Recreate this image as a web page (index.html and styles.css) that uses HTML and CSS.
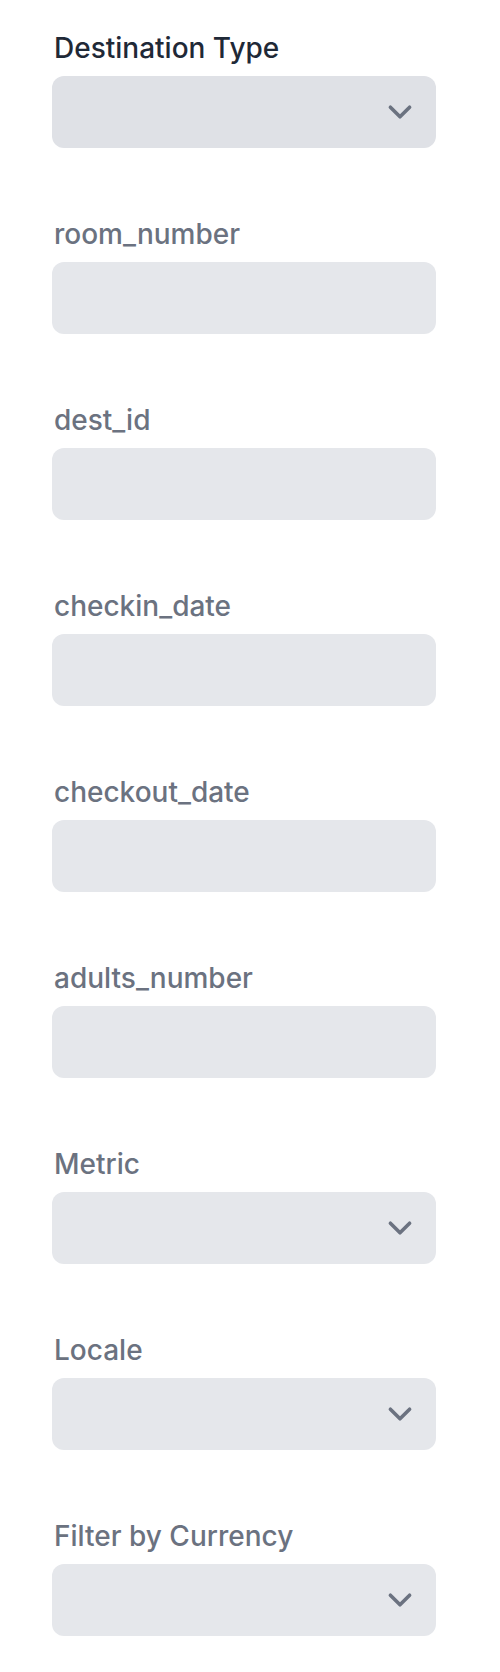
FILE: index.html
```html
<!DOCTYPE html>
<html lang="en">
<head>
<meta charset="utf-8">
<title>Form</title>
<link rel="stylesheet" href="styles.css">
</head>
<body>
<form class="form">
  <div class="field">
    <label class="label label-primary">Destination Type</label>
    <div class="box box-select box-dark">
      <svg class="chev" viewBox="0 0 20 20" width="48" height="48"><path d="M6 8l4 4 4-4" fill="none" stroke="#6b7280" stroke-width="1.5" stroke-linecap="round" stroke-linejoin="round"/></svg>
    </div>
  </div>
  <div class="field">
    <label class="label">room_number</label>
    <div class="box"></div>
  </div>
  <div class="field">
    <label class="label">dest_id</label>
    <div class="box"></div>
  </div>
  <div class="field">
    <label class="label">checkin_date</label>
    <div class="box"></div>
  </div>
  <div class="field">
    <label class="label">checkout_date</label>
    <div class="box"></div>
  </div>
  <div class="field">
    <label class="label">adults_number</label>
    <div class="box"></div>
  </div>
  <div class="field">
    <label class="label">Metric</label>
    <div class="box box-select">
      <svg class="chev" viewBox="0 0 20 20" width="48" height="48"><path d="M6 8l4 4 4-4" fill="none" stroke="#6b7280" stroke-width="1.5" stroke-linecap="round" stroke-linejoin="round"/></svg>
    </div>
  </div>
  <div class="field">
    <label class="label">Locale</label>
    <div class="box box-select">
      <svg class="chev" viewBox="0 0 20 20" width="48" height="48"><path d="M6 8l4 4 4-4" fill="none" stroke="#6b7280" stroke-width="1.5" stroke-linecap="round" stroke-linejoin="round"/></svg>
    </div>
  </div>
  <div class="field">
    <label class="label">Filter by Currency</label>
    <div class="box box-select">
      <svg class="chev" viewBox="0 0 20 20" width="48" height="48"><path d="M6 8l4 4 4-4" fill="none" stroke="#6b7280" stroke-width="1.5" stroke-linecap="round" stroke-linejoin="round"/></svg>
    </div>
  </div>
</form>
</body>
</html>
```

FILE: styles.css
```css
html, body {
  margin: 0;
  padding: 0;
  background: #ffffff;
}

.form {
  display: flex;
  flex-direction: column;
  gap: 66px;
  padding: 28px 0 36px 52px;
  width: 384px;
  font-family: Inter, "Noto Sans", sans-serif;
}

.field {
  display: flex;
  flex-direction: column;
  gap: 8px;
}

.label {
  display: block;
  font-size: 28px;
  line-height: 40px;
  font-weight: 500;
  color: #6b7280;
  padding-left: 2px;
}

.label-primary {
  color: #1f2937;
}

.box {
  height: 72px;
  border-radius: 12px;
  background: #e5e7eb;
}

.box-dark {
  background: #dfe1e6;
}

.box-select {
  display: flex;
  align-items: center;
  justify-content: flex-end;
  padding-right: 12px;
}

.chev {
  display: block;
}
```
